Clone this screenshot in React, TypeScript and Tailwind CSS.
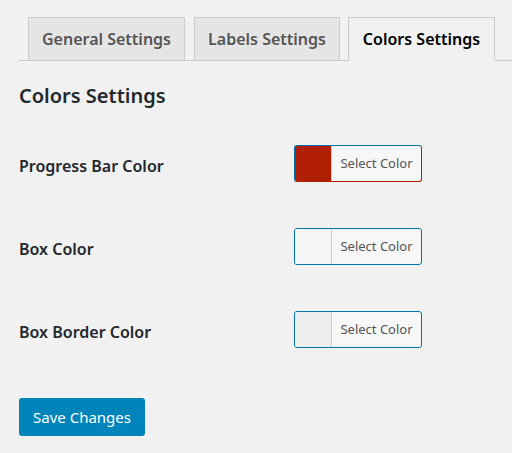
import React from "react";

const rows = [
  { label: "Progress Bar Color", swatch: "bg-[#b01e04]", edge: "border-r-[#b01e04] border-b-[#b01e04]" },
  { label: "Box Color", swatch: "bg-[#f3f5f6]", edge: "" },
  { label: "Box Border Color", swatch: "bg-[#efefef]", edge: "" },
];

function ColorButton({ swatch, edge }: { swatch: string; edge: string }) {
  return (
    <button
      className={`flex h-[37px] w-[128px] overflow-hidden rounded-[3px] border border-[#0073aa] bg-[#f7f7f7] ${edge}`}
    >
      <span className={`h-full w-[37px] border-r border-[#ccc] ${swatch}`} />
      <span className="flex h-full flex-1 items-center justify-center text-[13px] text-[#555]">
        Select Color
      </span>
    </button>
  );
}

export default function App() {
  return (
    <div
      className="h-[453px] w-[512px] bg-[#f1f1f1] pl-[19px] text-[#23282d]"
      style={{ fontFamily: '"Segoe UI", "Noto Sans", "Open Sans", sans-serif' }}
    >
      {/* Tabs */}
      <div className="flex h-[61px] items-end border-b border-[#ccc] pl-[9px] pt-[17px]">
        <div className="-mb-px flex h-[44px] w-[157px] items-center justify-center border border-[#ccc] bg-[#e5e5e5] text-[16px] font-semibold text-[#555]">
          General Settings
        </div>
        <div className="-mb-px ml-[9px] flex h-[44px] w-[146px] items-center justify-center border border-[#ccc] bg-[#e5e5e5] text-[16px] font-semibold text-[#555]">
          Labels Settings
        </div>
        <div className="-mb-px ml-[8px] flex h-[44px] w-[147px] items-center justify-center border border-b-[#f1f1f1] border-[#ccc] bg-[#f1f1f1] text-[16px] font-semibold text-black">
          Colors Settings
        </div>
      </div>

      <h2 className="mt-[21px] text-[20px] font-semibold leading-[28px]">Colors Settings</h2>

      <div className="mt-[35px] flex flex-col gap-[46px]">
        {rows.map((r) => (
          <div key={r.label} className="flex items-center">
            <div className="w-[275px] pt-[5px] text-[16px] font-semibold">{r.label}</div>
            <ColorButton swatch={r.swatch} edge={r.edge} />
          </div>
        ))}
      </div>

      <button className="mt-[50px] h-[38px] w-[126px] rounded-[3px] bg-[#0085ba] text-[15px] text-white">
        Save Changes
      </button>
    </div>
  );
}
